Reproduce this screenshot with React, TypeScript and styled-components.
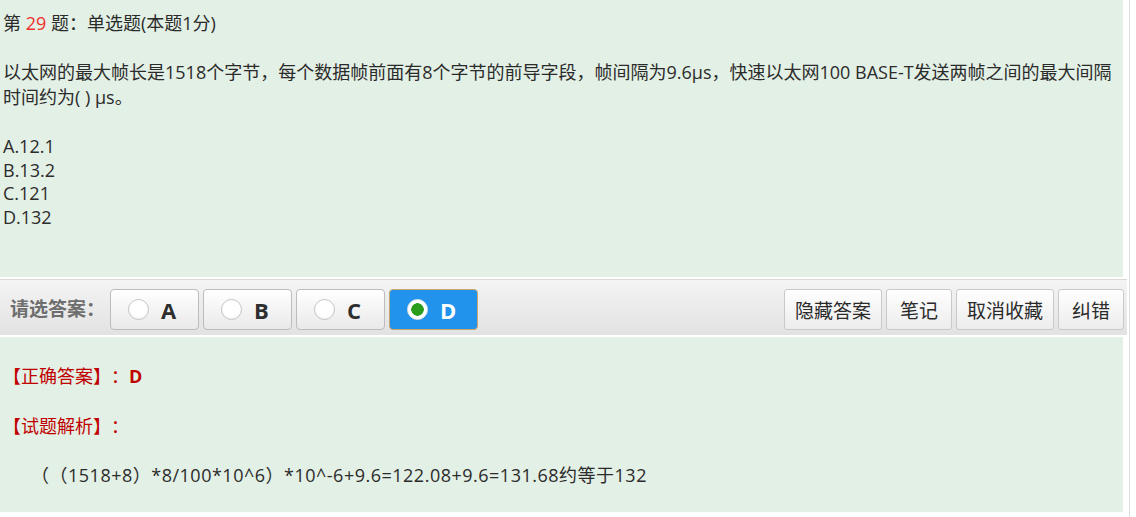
import React from "react";
import styled, { createGlobalStyle } from "styled-components";

const GlobalStyle = createGlobalStyle`
  html, body { margin: 0; padding: 0; background: #ffffff; }
  body {
    font-family: "Open Sans", "Noto Sans CJK SC", sans-serif;
    color: #333333;
    text-spacing-trim: space-all;
  }
  * { box-sizing: border-box; }
`;

const Page = styled.div`
  width: 1129px;
  min-height: 517px;
  border-right: 1px solid #dedede;
  box-sizing: content-box;
`;

const Panel = styled.section<{ $h: number; $pt: number }>`
  width: 1123px;
  height: ${(p) => p.$h}px;
  background: #e3f0e5;
  padding: ${(p) => p.$pt}px 0 0 3px;
`;

const Title = styled.div`
  font-size: 18px;
  line-height: 25px;
  color: #2b2b2b;
`;

const Num = styled.span`
  color: #f02d2d;
`;

const Stem = styled.p`
  margin: 24px 0 0;
  font-size: 18px;
  line-height: 24.5px;
  color: #2b2b2b;
`;

const Options = styled.div`
  margin-top: 26px;
  display: flex;
  flex-direction: column;
`;

const Option = styled.div`
  font-size: 18px;
  line-height: 23.5px;
  color: #2b2b2b;
`;

const Toolbar = styled.div`
  width: 1127px;
  height: 56px;
  margin: 2px 0 2px;
  border-top: 1px solid #d9d9d9;
  background: linear-gradient(#f4f4f4, #e2e2e2);
  display: flex;
  align-items: flex-start;
  padding: 9px 3px 0 10px;
`;

const Label = styled.div`
  font-size: 19px;
  line-height: 41px;
  font-weight: 700;
  color: #6e6e6e;
  width: 100px;
`;

const Choices = styled.div`
  display: flex;
  gap: 4px;
`;

const Choice = styled.button<{ $on?: boolean }>`
  width: 89px;
  height: 41px;
  border-radius: 4px;
  border: 1px solid ${(p) => (p.$on ? "#c9a66b" : "#bcbcbc")};
  background: ${(p) =>
    p.$on ? "#2193ec" : "linear-gradient(#ffffff, #e9e9e9)"};
  display: flex;
  align-items: center;
  padding: 0 0 0 17px;
  gap: 12px;
  font-family: "Open Sans", sans-serif;
  font-size: 22px;
  font-weight: 700;
  color: ${(p) => (p.$on ? "#ffffff" : "#2e2e2e")};
  cursor: pointer;
`;

const Dot = styled.span<{ $on?: boolean }>`
  width: 21px;
  height: 21px;
  border-radius: 50%;
  border: 1px solid ${(p) => (p.$on ? "#e6e6e6" : "#c4c4c4")};
  background: ${(p) =>
    p.$on
      ? "radial-gradient(circle, #2a9d1d 0 6px, #ffffff 6.5px)"
      : "radial-gradient(circle at 50% 40%, #ffffff 55%, #ececec)"};
  flex: none;
`;

const Actions = styled.div`
  margin-left: auto;
  display: flex;
  gap: 4px;
`;

const Action = styled.button`
  height: 41px;
  min-width: 66px;
  padding: 0 10px;
  border: 1px solid #c9c9c9;
  border-radius: 3px;
  background: linear-gradient(#ffffff, #ececec);
  font-family: "Noto Sans CJK SC", sans-serif;
  font-size: 19px;
  color: #2a2a2a;
  cursor: pointer;
`;

const Line = styled.p<{ $mt: number; $indent?: number; $wide?: boolean }>`
  margin: ${(p) => p.$mt}px 0 0;
  padding-left: ${(p) => p.$indent ?? 0}px;
  font-size: 18px;
  line-height: 25px;
  letter-spacing: ${(p) => (p.$wide ? "0.5px" : "0")};
  color: #2b2b2b;
`;

const Red = styled.span<{ $bold?: boolean }>`
  color: #c00000;
  font-weight: ${(p) => (p.$bold ? 700 : 400)};
`;

const choices = ["A", "B", "C", "D"];
const actions = ["隐藏答案", "笔记", "取消收藏", "纠错"];

export default function App() {
  return (
    <>
      <GlobalStyle />
      <Page>
        <Panel $h={277} $pt={11}>
          <Title>
            第 <Num>29</Num> 题：单选题(本题1分)
          </Title>
          <Stem>
            以太网的最大帧长是1518个字节，每个数据帧前面有8个字节的前导字段，帧间隔为9.6μs，快速以太网100 BASE-T发送两帧之间的最大间隔
            <br />
            时间约为( ) μs。
          </Stem>
          <Options>
            <Option>A.12.1</Option>
            <Option>B.13.2</Option>
            <Option>C.121</Option>
            <Option>D.132</Option>
          </Options>
        </Panel>
        <Toolbar>
          <Label>请选答案：</Label>
          <Choices>
            {choices.map((c) => (
              <Choice key={c} $on={c === "D"}>
                <Dot $on={c === "D"} />
                {c}
              </Choice>
            ))}
          </Choices>
          <Actions>
            {actions.map((a) => (
              <Action key={a}>{a}</Action>
            ))}
          </Actions>
        </Toolbar>
        <Panel $h={175} $pt={27}>
          <Line $mt={0}>
            <Red>【正确答案】：</Red>
            <Red $bold>D</Red>
          </Line>
          <Line $mt={25}>
            <Red>【试题解析】：</Red>
          </Line>
          <Line $mt={24} $indent={28} $wide>
            （（1518+8）*8/100*10^6）*10^-6+9.6=122.08+9.6=131.68约等于132
          </Line>
        </Panel>
      </Page>
    </>
  );
}
